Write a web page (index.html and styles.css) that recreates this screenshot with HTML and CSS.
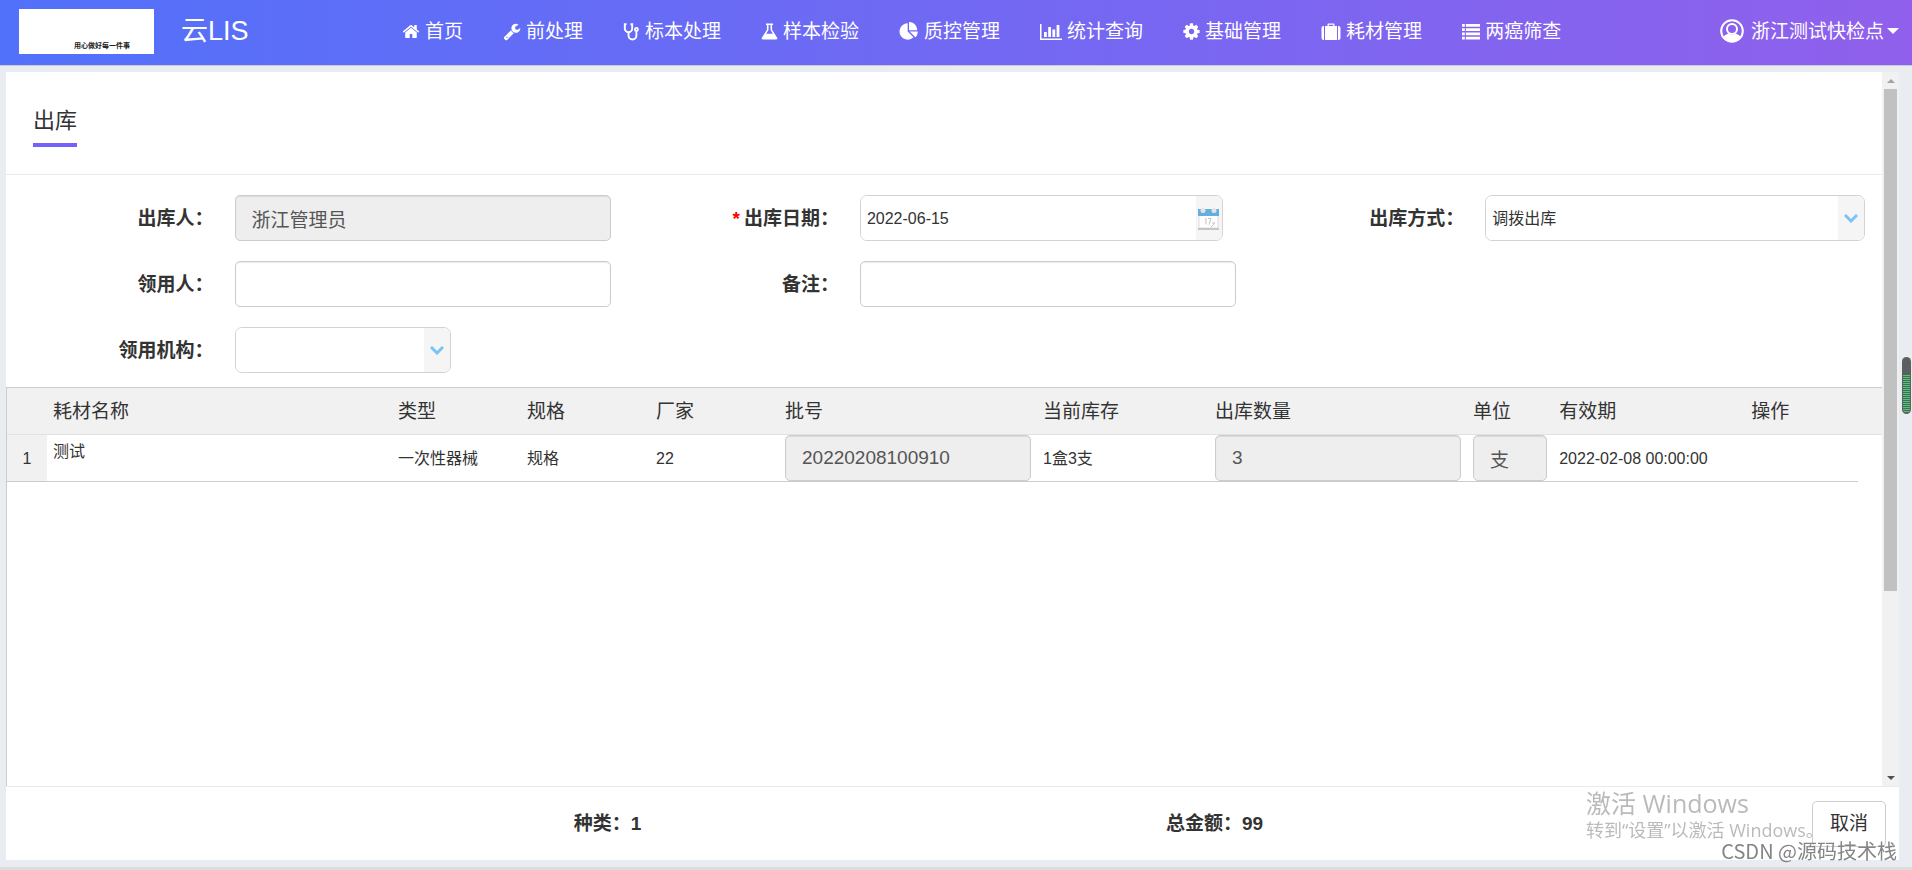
FILE: index.html
```html
<!DOCTYPE html>
<html lang="zh-CN">
<head>
<meta charset="utf-8">
<title>云LIS - 出库</title>
<link rel="stylesheet" href="styles.css">
</head>
<body>
<header class="topbar">
  <div class="logo"><span class="logo-text">用心做好每一件事</span></div>
  <div class="brand">云LIS</div>
  <nav class="nav">
    <a class="nav-item" href="#"><svg class="i18" viewBox="0 0 1792 1792"><path d="M1472 992v480q0 26-19 45t-45 19h-384v-384h-256v384h-384q-26 0-45-19t-19-45v-480q0-1 .5-3t.5-3l575-474 575 474q1 2 1 6zm223-69l-62 74q-8 9-21 11h-3q-13 0-21-7l-692-577-692 577q-12 8-24 7-13-2-21-11l-62-74q-8-10-7-23.5t11-21.5l719-599q32-26 76-26t76 26l244 204v-195q0-14 9-23t23-9h192q14 0 23 9t9 23v408l219 182q10 8 11 21.5t-7 23.5z"/></svg>首页</a>
    <a class="nav-item" href="#"><svg class="i18" viewBox="0 0 1792 1792"><path d="M448 1472q0-26-19-45t-45-19-45 19-19 45 19 45 45 19 45-19 19-45zm644-420l-682 682q-37 37-90 37-52 0-91-37l-106-108q-38-36-38-90 0-53 38-91l681-681q39 98 114.500 173.500t173.500 114.500zm634-435q0 39-23 106-47 134-164.500 217.500t-258.500 83.500q-185 0-316.500-131.500t-131.500-316.500 131.500-316.500 316.500-131.500q58 0 121.500 16.500t107.500 46.500q16 11 16 28t-16 28l-293 169v224l193 107q5-3 79-48.500t135.500-81 70.500-35.500q15 0 23.500 10t8.500 25z"/></svg>前处理</a>
    <a class="nav-item" href="#"><svg class="i17" viewBox="0 0 16 19"><g fill="none" stroke="currentColor" stroke-width="1.900"><path d="M3 2.300H1.300V6.500a3.700 3.700 0 0 0 7.400 0V2.300H7M5 10.200v3.300a3.800 3.800 0 0 0 7.900 0V9"/><circle cx="12.900" cy="7.400" r="1.500"/></g></svg>标本处理</a>
    <a class="nav-item" href="#"><svg class="i17" viewBox="0 0 16 19"><path fill-rule="evenodd" d="M4.500 1.500h7v1.500h-.9v4.700l4.900 7.800q1.200 2-1.200 2H1.700q-2.400 0-1.200-2l4.900-7.800V3h-.9zM7 3v5l-2.300 3.800h6.600L9 8V3z"/></svg>样本检验</a>
    <a class="nav-item" href="#"><svg class="i20" viewBox="0 0 1792 1792"><path d="M768 890l546 546q-106 108-247.500 168t-298.500 60q-209 0-385.500-103t-279.500-279.500-103-385.500 103-385.500 279.500-279.500 385.500-103v762zm187 6h773q0 157-60 298.500t-168 247.500zm709-128h-768v-768q209 0 385.500 103t279.500 279.500 103 385.500z"/></svg>质控管理</a>
    <a class="nav-item" href="#"><svg class="i22" viewBox="0 0 22 19"><path d="M0 2h1.500v14.500H22V18H0zM4 10h2.800v5H4zM8.200 5H11v10H8.200zM12.400 7.500h2.800V15h-2.800zM16.600 3h2.800v12h-2.800z"/></svg>统计查询</a>
    <a class="nav-item" href="#"><svg class="i17" viewBox="128 0 1536 1792"><path d="M1152 896q0-106-75-181t-181-75-181 75-75 181 75 181 181 75 181-75 75-181zm512-109v222q0 12-8 23t-20 13l-185 28q-19 54-39 91 35 50 107 138 10 12 10 25t-9 23q-27 37-99 108t-94 71q-12 0-26-9l-138-108q-44 23-91 38-16 136-29 186-7 28-36 28h-222q-14 0-24.500-8.500t-11.500-21.500l-28-184q-49-16-90-37l-141 107q-10 9-25 9-14 0-25-11-126-114-165-168-7-10-7-23 0-12 8-23 15-21 51-66.500t54-70.500q-27-50-41-99l-183-27q-13-2-21-12.500t-8-23.500v-222q0-12 8-23t19-13l186-28q14-46 39-92-40-57-107-138-10-12-10-24 0-10 9-23 26-36 98.500-107.500t94.500-71.500q13 0 26 10l138 107q44-23 91-38 16-136 29-186 7-28 36-28h222q14 0 24.500 8.500t11.500 21.500l28 184q49 16 90 37l142-107q9-9 24-9 13 0 25 10 129 119 165 170 7 8 7 22 0 12-8 23-15 21-51 66.500t-54 70.500q26 50 41 98l183 28q13 2 21 12.500t8 23.500z"/></svg>基础管理</a>
    <a class="nav-item" href="#"><svg class="i20" viewBox="0 0 19 19"><path fill-rule="evenodd" d="M6 4V2.200Q6 1.500 6.700 1.500h5.600q.7 0 .7.700V4h2.500v14h-12V4zM7.300 2.800V4h4.400V2.800zM2.500 4v14H2q-2 0-2-2V6q0-2 2-2zM16.500 4v14h.5q2 0 2-2V6q0-2-2-2z"/></svg>耗材管理</a>
    <a class="nav-item" href="#"><svg class="i18" viewBox="0 0 19 19"><path d="M0 1.500h3v3H0zM4 1.500h15v3H4zM0 6h3v3H0zM4 6h15v3H4zM0 10.500h3v3H0zM4 10.500h15v3H4zM0 15h3v3H0zM4 15h15v3H4z"/></svg>两癌筛查</a>
  </nav>
  <button class="user" type="button"><svg class="i24" viewBox="0 0 24 24"><circle cx="12" cy="12" r="10.800" fill="none" stroke="currentColor" stroke-width="2"/><path d="M3 18q1.500-2.500 5.500-3.500 3.500 2.500 7 0 4 1 5.500 3.500-3.500 5-9 5t-9-5z"/><circle cx="12" cy="10" r="5" fill="none" stroke="currentColor" stroke-width="2"/></svg>浙江测试快检点<span class="caret"></span></button>
</header>

<main class="panel">
  <div class="scroller">
    <div class="content">
      <div class="title-row"><h1 class="title">出库</h1></div>
      <form class="form">
        <div class="field"><label for="operator">出库人：</label><input id="operator" class="input" type="text" value="浙江管理员" disabled></div>
        <div class="field"><label for="date"><span class="required">*</span>出库日期：</label>
          <div class="combo combo-date"><input id="date" type="text" value="2022-06-15"><button class="combo-btn" type="button" aria-label="选择日期"><svg width="21" height="23" viewBox="0 0 21 23"><path fill="#fff" stroke="#ddd" d="M1 4h19v17H1z"/><path fill="#62b1dc" d="M0 2h21v7H0z"/><circle cx="5" cy="3.500" r="2.500" fill="#e3e3e3"/><circle cx="16" cy="3.500" r="2.500" fill="#e3e3e3"/><path fill="none" stroke="#c3c3c3" d="M7 12.500l1-1v6M10 11.500h3l-2 6M14 16h3l-4 4"/><path fill="#c5c5c5" d="M0 21h21v2H0z"/></svg></button></div></div>
        <div class="field"><label for="mode">出库方式：</label>
          <div class="combo combo-mode"><select id="mode"><option>调拨出库</option></select><span class="combo-btn"><svg width="14" height="9" viewBox="0 0 14 9"><path d="M1 1l6 6 6-6" fill="none" stroke="#7cc2f5" stroke-width="3"/></svg></span></div></div>
        <div class="field"><label for="receiver">领用人：</label><input id="receiver" class="input" type="text"></div>
        <div class="field"><label for="remark">备注：</label><input id="remark" class="input" type="text"></div>
        <div class="field field-start"><label for="org">领用机构：</label>
          <div class="combo combo-org"><select id="org"><option></option></select><span class="combo-btn"><svg width="14" height="9" viewBox="0 0 14 9"><path d="M1 1l6 6 6-6" fill="none" stroke="#7cc2f5" stroke-width="3"/></svg></span></div></div>
      </form>
      <div class="grid">
        <table class="table">
          <colgroup><col class="c-num"><col class="c-name"><col class="c-s"><col class="c-s"><col class="c-s"><col class="c-l"><col class="c-stock"><col class="c-l"><col class="c-unit"><col class="c-exp"><col><col class="c-end"></colgroup>
          <thead><tr><th></th><th>耗材名称</th><th>类型</th><th>规格</th><th>厂家</th><th>批号</th><th>当前库存</th><th>出库数量</th><th>单位</th><th>有效期</th><th>操作</th><th></th></tr></thead>
          <tbody><tr><td class="num">1</td><td class="name">测试</td><td>一次性器械</td><td>规格</td><td>22</td><td><input class="input" type="text" value="20220208100910" aria-label="批号" disabled></td><td>1盒3支</td><td><input class="input" type="text" value="3" aria-label="出库数量" disabled></td><td><input class="input" type="text" value="支" aria-label="单位" disabled></td><td>2022-02-08 00:00:00</td><td></td><td class="end"></td></tr></tbody>
        </table>
      </div>
    </div>
    <div class="scrollbar"><span class="arrow up"></span><div class="track"><div class="thumb"></div></div><span class="arrow down"></span></div>
  </div>
  <footer class="summary">
    <div class="totals"><span>种类：1</span><span>总金额：99</span></div>
    <button class="cancel" type="button">取消</button>
  </footer>
</main>
<div class="strip"></div>
<div class="meter"><div class="meter-level"></div></div>
<div class="activate"><div class="activate-title">激活 Windows</div><div class="activate-note">转到“设置”以激活 Windows。</div></div>
<div class="credit">CSDN @源码技术栈</div>
</body>
</html>
```
FILE: styles.css
```css
* { box-sizing: border-box; }
body {
  margin: 0;
  height: 100vh;
  display: flex;
  flex-direction: column;
  overflow: hidden;
  background: #e9edf2;
  color: #333;
  font: 19px/27px "Liberation Sans", "Noto Sans CJK SC", sans-serif;
}
input, select, button { font: inherit; color: inherit; }

.topbar {
  display: flex;
  align-items: center;
  flex: none;
  height: 66px;
  padding: 0 13px 3px 19px;
  border-bottom: 1px solid #c8cad6;
  background: linear-gradient(90deg, #5271fa, #9060ec);
  color: #fff;
}
.logo {
  display: flex;
  align-items: flex-end;
  justify-content: flex-end;
  width: 135px;
  height: 45px;
  padding: 0 24px 4px 0;
  background: #fff;
}
.logo-text { color: #222; font-size: 7px; font-weight: 700; line-height: 8px; }
.brand { width: 201px; margin-left: 27px; font-size: 27px; }
.nav { display: flex; flex: 1; }
.nav-item {
  display: flex;
  align-items: center;
  gap: 5px;
  padding: 0 20px;
  color: inherit;
  text-decoration: none;
  white-space: nowrap;
}
.topbar svg { flex: none; height: 19px; fill: currentColor; }
.i17 { width: 17px; }
.i18 { width: 18px; }
.i20 { width: 20px; }
.i22 { width: 22px; }
.topbar .i24 { width: 24px; height: 24px; margin-right: 7px; }
.user {
  display: flex;
  align-items: center;
  padding: 0;
  border: 0;
  background: none;
  white-space: nowrap;
}
.caret { margin-left: 3px; border: 6px solid transparent; border-top-color: #fff; border-bottom: 0; }

.panel {
  display: flex;
  flex: 1;
  flex-direction: column;
  min-height: 0;
  margin: 6px 13px 7px 6px;
  background: #fff;
}
.scroller { display: flex; flex: 1; min-height: 0; }
.content { display: flex; flex: 1; flex-direction: column; min-width: 0; }
.title-row { height: 103px; padding: 34px 27px 0; border-bottom: 1px solid #ebebeb; }
.title {
  display: inline-block;
  margin: 0;
  padding-bottom: 7px;
  border-bottom: 4px solid #7460fa;
  font-size: 22px;
  font-weight: 400;
  line-height: 30px;
}

.form {
  display: grid;
  grid-template-columns: repeat(3, 1fr);
  row-gap: 20px;
  padding: 20px 0 14px;
}
.field { display: flex; align-items: center; height: 46px; }
.field-start { grid-column: 1; }
.field label { width: 33.2%; margin-right: 21px; text-align: right; font-weight: 700; white-space: nowrap; }
.required { margin-right: 4px; color: #f00; }
.input {
  width: 100%;
  height: 46px;
  padding: 0 16px;
  border: 1px solid #ccc;
  border-radius: 5px;
  background: #fff;
  box-shadow: inset 0 1px 1px rgba(0, 0, 0, .08);
}
.input:disabled { background: #eee; color: #555; }
.field .input { width: 60.2%; }
.combo {
  display: flex;
  height: 46px;
  border: 1px solid #d3d3d3;
  border-radius: 7px;
  overflow: hidden;
  font-size: 16px;
}
.combo-date { width: 58%; }
.combo-mode { width: 60.8%; }
.combo-org { width: 34.6%; }
.combo input, .combo select {
  flex: 1;
  min-width: 0;
  padding: 0 6px;
  border: 0;
  outline: 0;
  background: #fff;
  appearance: none;
}
.combo-btn {
  display: flex;
  flex: none;
  align-items: center;
  justify-content: center;
  width: 26px;
  padding: 0;
  border: 0;
  background: #f5f5f5;
}

.grid { flex: 1; border-top: 1px solid #ccc; border-left: 1px solid #ccc; }
.table { width: 100%; border-collapse: separate; border-spacing: 0; table-layout: fixed; }
.c-num { width: 40px; }
.c-name { width: 18.4%; }
.c-s { width: 6.88%; }
.c-l { width: 13.76%; }
.c-stock { width: 9.17%; }
.c-unit { width: 4.6%; }
.c-exp { width: 10.24%; }
.c-end { width: 24px; }
.table th {
  height: 47px;
  padding: 0 6px;
  border-bottom: 1px solid #e2e2e2;
  background: #f1f1f1;
  font-weight: 400;
  text-align: left;
}
.table td { height: 47px; padding: 0 6px; border-bottom: 1px solid #ccc; font-size: 16px; white-space: nowrap; }
.table td.num { background: #f1f1f1; text-align: center; }
.table td.name { padding-top: 3px; vertical-align: top; }
.table td.end { border: 0; }
.table .input { display: block; font-size: 19px; }

.scrollbar {
  display: flex;
  flex: none;
  flex-direction: column;
  align-items: center;
  width: 17px;
  background: #f1f1f1;
}
.arrow { display: flex; align-items: center; justify-content: center; width: 17px; height: 17px; }
.arrow::before { content: ""; border: 4px solid transparent; }
.up::before { border-top: 0; border-bottom-color: #a3a3a3; }
.down::before { border-bottom: 0; border-top-color: #505050; }
.track { flex: 1; width: 13px; }
.thumb { height: 73.8%; background: #c1c1c1; }

.summary {
  display: flex;
  flex: none;
  align-items: center;
  height: 74px;
  padding: 0 13px 0 0;
  border-top: 1px solid #ebebeb;
}
.totals { display: flex; flex: 1; padding: 0 294px 0 298px; font-weight: 700; }
.totals span { flex: 1; text-align: center; }
.cancel {
  width: 74px;
  height: 46px;
  border: 1px solid #ccc;
  border-radius: 5px;
  background: #fff;
}
.strip { flex: none; height: 3px; background: #dcdcdc; }

.meter {
  position: fixed;
  top: 357px;
  right: 1px;
  display: flex;
  align-items: flex-end;
  width: 9px;
  height: 57px;
  padding: 1px;
  border-radius: 5px;
  background: #5c5e60;
}
.meter-level {
  width: 100%;
  height: 38px;
  border-radius: 0 0 4px 4px;
  background: repeating-linear-gradient(#3fcf70 0 1px, #5c5e60 1px 2px);
}
.activate {
  position: fixed;
  right: 92px;
  bottom: 27px;
  width: 234px;
  color: rgba(130, 130, 130, .55);
  font-family: "Open Sans", "Noto Sans CJK SC", sans-serif;
  white-space: nowrap;
  pointer-events: none;
}
.activate-title { font-size: 25px; line-height: 28px; }
.activate-note { font-size: 18px; line-height: 26px; }
.credit {
  position: fixed;
  right: 15px;
  bottom: 5px;
  color: #858585;
  font: 20px/28px "Noto Sans CJK SC", sans-serif;
  white-space: nowrap;
  pointer-events: none;
}
```
